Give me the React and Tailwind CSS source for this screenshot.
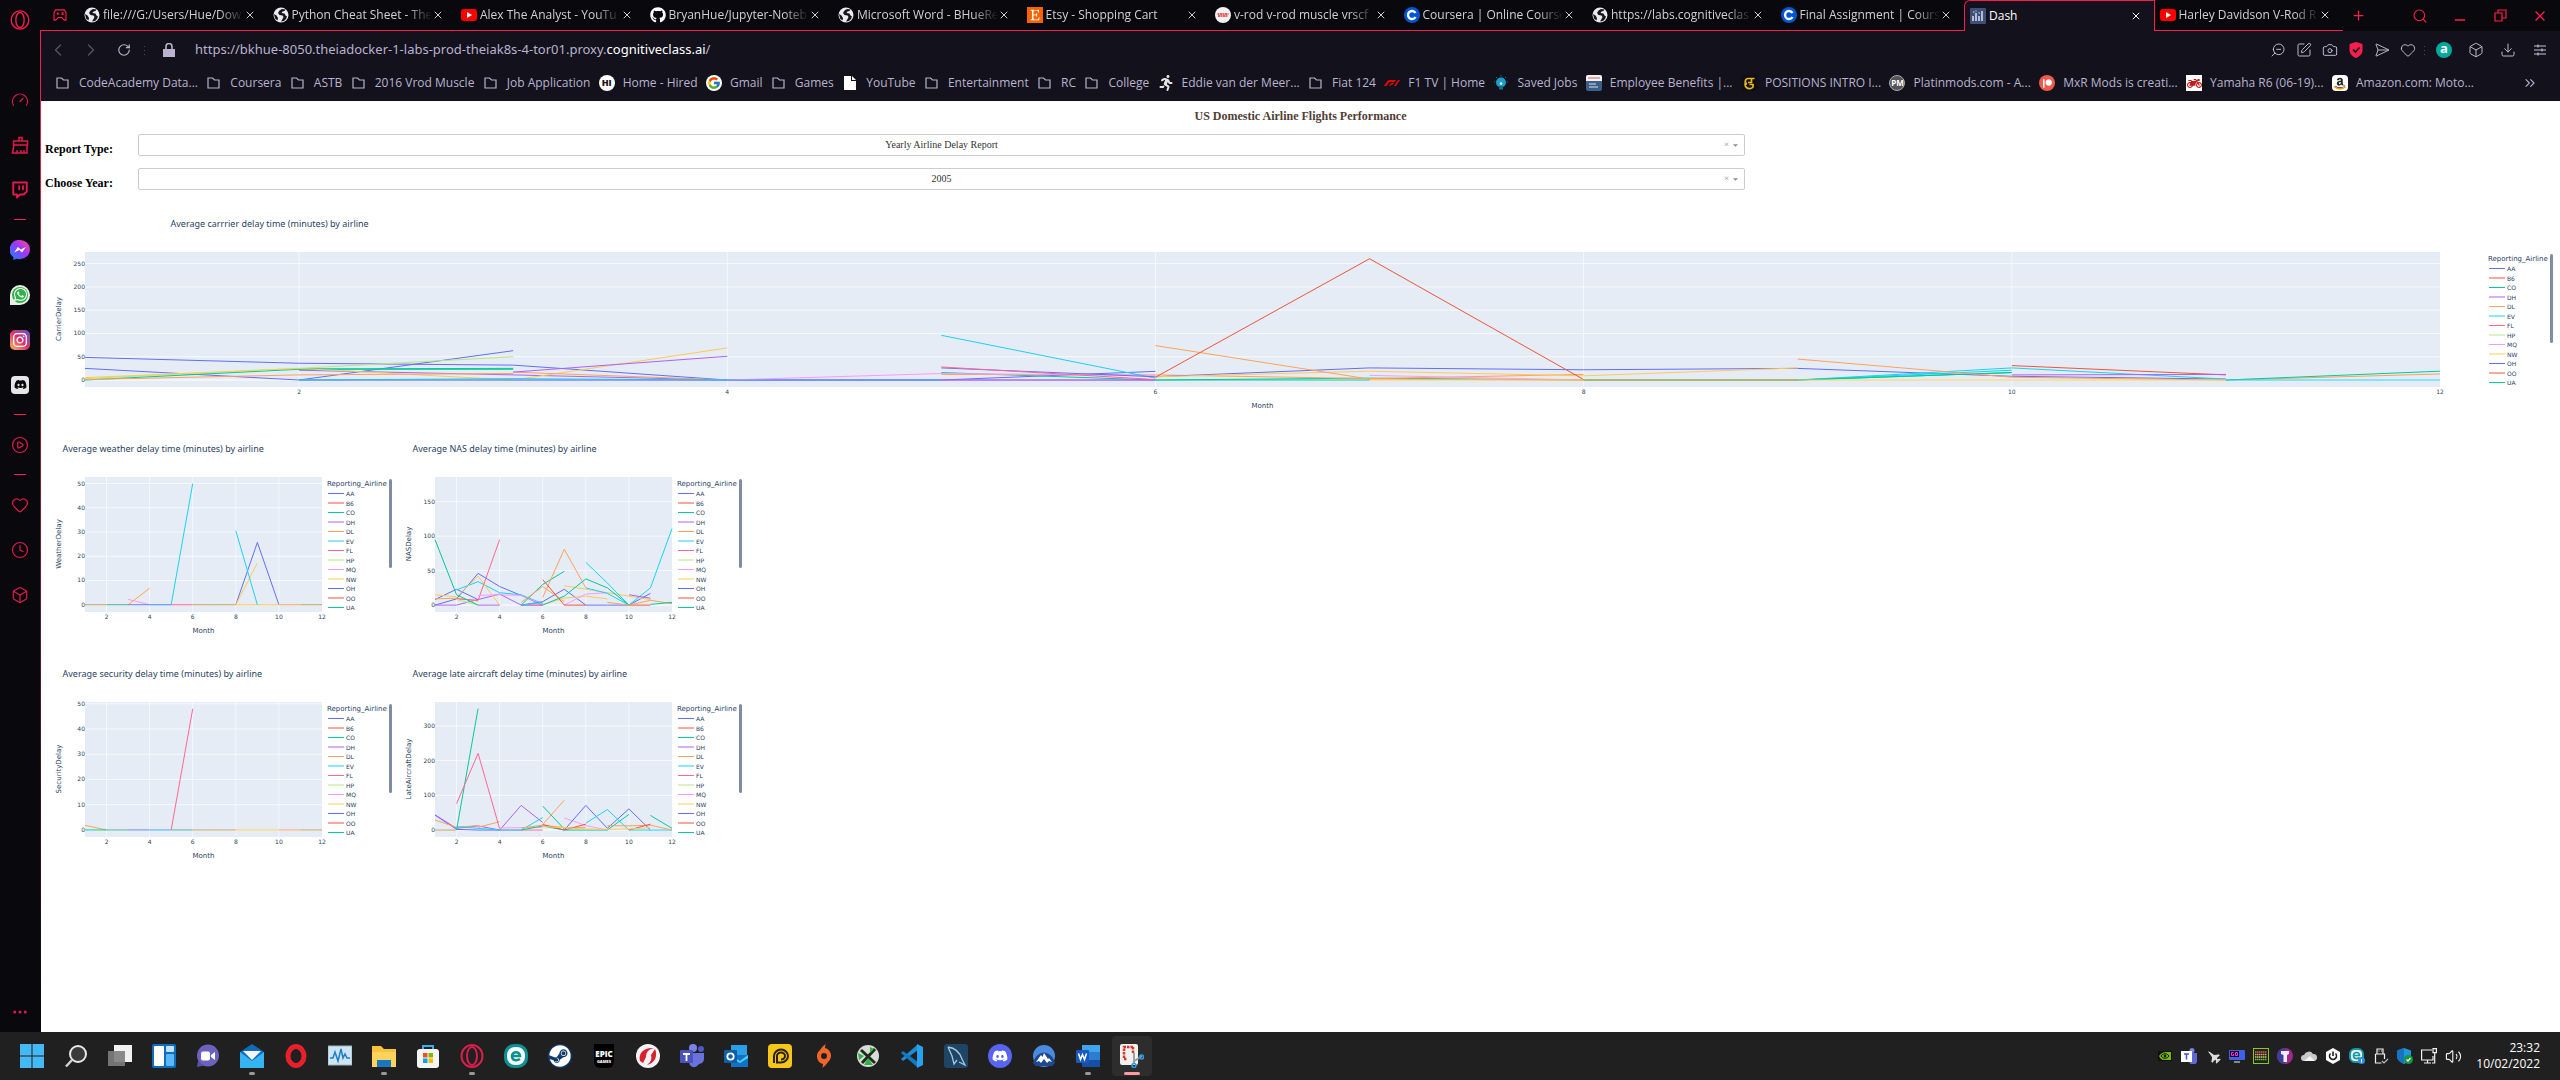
import React from "react";
import {
  FaGithub, FaEtsy, FaAmazon, FaPatreon, FaInstagram, FaWhatsapp,
  FaDiscord, FaSteam, FaMotorcycle, FaRunning, FaFighterJet,
} from "react-icons/fa";
import { FcGoogle } from "react-icons/fc";
import {
  Search, X, Plus, Minus, Copy, RotateCw, ChevronLeft, ChevronRight, ZoomOut,
  SquarePen, Camera, SendHorizontal, Heart, Box, Download, ChevronsRight,
  Gauge, Twitch, CirclePlay, Clock, Ellipsis, Volume2,
} from "lucide-react";

/* ---------- favicons ---------- */

const Globe = () => (
  <svg viewBox="0 0 16 16" className="size-4">
    <circle cx="8" cy="8" r="7.500" fill="#ececf0" />
    <path d="M12.500 2.500L9 2 6.500 3.500 5 6l1.500 2 3 .5 1 1.500-1 2-1.500 2.500 3-.5 2-2 1-2.500-1.500-1-1-2-3-.5 1-1.500 2-.5z" fill="#16151d" />
    <path d="M1 7l2.500 1.500L5 11l-.5 2.500L2 11.500z" fill="#16151d" />
  </svg>
);
const Tube = () => (
  <svg viewBox="0 0 16 16" className="size-4">
    <rect y="2" width="16" height="12" rx="3" fill="#f00" />
    <path d="M6 5l5 3-5 3z" fill="#fff" />
  </svg>
);
const CourseraMark = () => (
  <svg viewBox="0 0 16 16" className="size-4">
    <circle cx="8" cy="8" r="8" fill="#0056d2" />
    <path d="M11.5 6A4 4 0 1 0 11.5 10" fill="none" stroke="#fff" strokeWidth="2.4" />
  </svg>
);
const DashMark = () => (
  <svg viewBox="0 0 16 16" className="size-4">
    <rect width="16" height="16" rx="1" fill="#3f4f75" />
    <path d="M3 8v5M6 5v8M9 8v5M12 3v10" stroke="#cfd8ee" strokeWidth="1.6" />
    <path d="M3 4h1.5M8.500 5h1.500M5.500 3h1" stroke="#8fb4f0" strokeWidth="1.4" />
  </svg>
);
const VrodMark = () => (
  <svg viewBox="0 0 16 16" className="size-4">
    <circle cx="8" cy="8" r="8" fill="#f2f2f2" />
    <path d="M2.500 7h11M3 9h10" stroke="#d33" strokeWidth="1.500" strokeDasharray="2 .5" />
  </svg>
);
const EtsyMark = () => (
  <span className="flex size-4 items-center justify-center bg-[#f56400]">
    <FaEtsy className="size-3 text-white" />
  </span>
);
const GitMark = () => <FaGithub className="size-4 text-white" />;

/* ---------- bookmark icons ---------- */

const FolderIcon = () => (
  <svg viewBox="0 0 14 12" className="h-3 w-[14px]" fill="none" stroke="#b9b3cf" strokeWidth="1.200">
    <path d="M1 1h4.500l2 2H12v8H1z" />
  </svg>
);
const HiredMark = () => (
  <span className="flex size-4 items-center justify-center rounded-full bg-white text-[9px] font-black text-[#15141c]">HI</span>
);
const PageMark = () => (
  <svg viewBox="0 0 16 16" className="size-4">
    <path d="M2 1h7v5h5v9H2z" fill="#fff" />
    <path d="M10 1l4 4h-4z" fill="#fff" />
  </svg>
);
const RunMark = () => <FaRunning className="size-4 text-[#e4e4e4]" />;
const F1Mark = () => (
  <svg viewBox="0 0 16 16" className="size-4">
    <path d="M0 11l3-4.500C3.600 5.500 4.500 5 6 5h6l-1.500 2H6.500c-1 0-1.300.2-1.900 1L2.500 11zM5 11l1.800-2.400c.4-.5.7-.6 1.400-.6h2l-1.200 1.500H7.800L6.500 11zM10 11l4-6h2l-4 6z" fill="#e10600" />
  </svg>
);
const BulbMark = () => (
  <svg viewBox="0 0 16 16" className="size-4">
    <circle cx="8" cy="7.500" r="5" fill="#1c9fc7" />
    <path d="M6 11h4v3.500H6z" fill="#14708e" />
    <circle cx="8" cy="8.500" r="1.300" fill="#fff" />
    <path d="M8 0v1.500M1 7h1M14 7h1M3 2l1 1M13 2l-1 1" stroke="#14708e" />
  </svg>
);
const BenefitsMark = () => (
  <svg viewBox="0 0 16 16" className="size-4">
    <rect width="16" height="16" rx="2" fill="#3c5f86" />
    <path d="M0 2a2 2 0 0 1 2-2h12a2 2 0 0 1 2 2v4H0z" fill="#f2f2f2" />
    <path d="M2 3h12" stroke="#c66" strokeWidth="1" />
    <path d="M3 9h7M3 12h9" stroke="#d8e2ee" strokeWidth="1.200" />
  </svg>
);
const PositionsMark = () => (
  <svg viewBox="0 0 16 16" className="size-4">
    <rect width="16" height="16" fill="#0f0e12" />
    <path d="M13.500 3.500H7a3 3 0 0 0-1 5.700M10.500 3.500v4H7M5 6.500a4 4 0 1 0 7 5.500V9.500H8.500" fill="none" stroke="#e9b91c" strokeWidth="1.700" />
  </svg>
);
const PlatinMark = () => (
  <span className="flex size-4 items-center justify-center rounded-full border border-[#aaa] bg-[#555] text-[8px] font-bold text-white">PM</span>
);
const PatreonMark = () => (
  <span className="flex size-4 items-center justify-center rounded-full bg-[#f1594a]">
    <FaPatreon className="size-[9px] text-white" />
  </span>
);
const YamahaMark = () => (
  <span className="flex size-4 items-center justify-center bg-white">
    <FaMotorcycle className="size-[15px] text-[#c21d1d]" />
  </span>
);
const AmazonMark = () => (
  <span className="relative flex size-4 items-center justify-center rounded-sm bg-white">
    <FaAmazon className="size-3 text-[#222]" />
    <svg viewBox="0 0 16 16" className="absolute inset-0 size-4"><path d="M2 11.500c4 3 8 3 11.500.5" fill="none" stroke="#ff9900" strokeWidth="1.500" /></svg>
  </span>
);

const TABS = [
  ["file:///G:/Users/Hue/Dow", Globe],
  ["Python Cheat Sheet - The", Globe],
  ["Alex The Analyst - YouTu", Tube],
  ["BryanHue/Jupyter-Noteb", GitMark],
  ["Microsoft Word - BHueRe", Globe],
  ["Etsy - Shopping Cart", EtsyMark],
  ["v-rod v-rod muscle vrscf", VrodMark],
  ["Coursera | Online Course", CourseraMark],
  ["https://labs.cognitiveclas", Globe],
  ["Final Assignment | Cours", CourseraMark],
  ["Dash", DashMark],
  ["Harley Davidson V-Rod R", Tube],
];

const BOOKMARKS = [
  ["CodeAcademy Data...", FolderIcon], ["Coursera", FolderIcon], ["ASTB", FolderIcon],
  ["2016 Vrod Muscle", FolderIcon], ["Job Application", FolderIcon], ["Home - Hired", HiredMark],
  ["Gmail", () => <FcGoogle className="size-4 rounded-full bg-white p-px" />], ["Games", FolderIcon],
  ["YouTube", PageMark], ["Entertainment", FolderIcon], ["RC", FolderIcon], ["College", FolderIcon],
  ["Eddie van der Meer...", RunMark], ["Fiat 124", FolderIcon], ["F1 TV | Home", F1Mark],
  ["Saved Jobs", BulbMark], ["Employee Benefits |...", BenefitsMark],
  ["POSITIONS INTRO I...", PositionsMark], ["Platinmods.com - A...", PlatinMark],
  ["MxR Mods is creati...", PatreonMark], ["Yamaha R6 (06-19)...", YamahaMark],
  ["Amazon.com: Moto...", AmazonMark],
];

/* ---------- browser chrome ---------- */

const OperaRing = ({ className, color = "#fa1e4e", width = 1.6 }) => (
  <svg viewBox="0 0 24 24" className={className} fill="none" stroke={color} strokeWidth={width}>
    <ellipse cx="12" cy="12" rx="10.500" ry="11" />
    <ellipse cx="12" cy="12" rx="5" ry="9" />
  </svg>
);

function SideButton({ label, children }) {
  return (
    <button aria-label={label} className="flex h-[45px] w-10 items-center justify-center text-[#e0194a]">
      {children}
    </button>
  );
}
const SideRule = () => (
  <div className="flex h-[15px] items-center justify-center"><div className="h-px w-3 bg-[#fa1e4e]" /></div>
);

const CleanerIcon = () => (
  <svg viewBox="0 0 18 18" className="size-[18px]" fill="none" stroke="currentColor" strokeWidth="1.500">
    <path d="M8 5V1.500h3V5M2.500 5h14v4h-14zM3 9l-1.500 8h14.500V9M6 17v-3M10 17v-3M13 17v-3" />
  </svg>
);

function Sidebar() {
  return (
    <nav aria-label="Sidebar" className="flex w-10 shrink-0 flex-col bg-[#09090d]">
      <button aria-label="Opera menu" className="flex h-10 w-10 items-center justify-center">
        <OperaRing className="size-5" />
      </button>
      <div className="h-[37px]" />
      <SideButton label="GX Control"><Gauge className="size-[18px]" strokeWidth={1.6} /></SideButton>
      <SideButton label="GX Cleaner"><CleanerIcon /></SideButton>
      <SideButton label="Twitch"><Twitch className="size-[18px]" strokeWidth={2.6} /></SideButton>
      <SideRule />
      <SideButton label="Messenger">
        <svg viewBox="0 0 24 24" className="size-5">
          <defs>
            <linearGradient id="msg" x1="0" y1="1" x2="1" y2="0">
              <stop offset="0" stopColor="#0a8dff" /><stop offset=".55" stopColor="#a033ff" /><stop offset="1" stopColor="#ff5280" />
            </linearGradient>
          </defs>
          <path d="M12 0a12 11.500 0 0 1 0 23c-1.500 0-2.800-.2-4-.6L4 24v-3.500A11.500 11.500 0 0 1 12 0z" fill="url(#msg)" />
          <path d="M5 15l4.500-6.500 3.500 3 6-3-4.500 6.500-3.500-3z" fill="#fff" />
        </svg>
      </SideButton>
      <SideButton label="WhatsApp">
        <span className="flex size-5 items-center justify-center rounded-full rounded-bl-sm bg-[#e8efe8]">
          <span className="flex size-4 items-center justify-center rounded-full bg-[#2fb24a]">
            <FaWhatsapp className="size-[15px] text-white" />
          </span>
        </span>
      </SideButton>
      <SideButton label="Instagram">
        <span className="flex size-5 items-center justify-center rounded-[5px] bg-gradient-to-tr from-[#fdb94a] via-[#d92e6f] to-[#6a3fd0]">
          <FaInstagram className="size-4 text-white" />
        </span>
      </SideButton>
      <SideButton label="Discord">
        <span className="flex size-[18px] items-center justify-center rounded-sm bg-[#e6e6e6]">
          <FaDiscord className="size-[13px] text-[#09090d]" />
        </span>
      </SideButton>
      <SideRule />
      <SideButton label="Player"><CirclePlay className="size-[18px]" strokeWidth={1.6} /></SideButton>
      <SideRule />
      <SideButton label="Pinboards"><Heart className="size-[18px]" strokeWidth={1.6} /></SideButton>
      <SideButton label="History"><Clock className="size-[18px]" strokeWidth={1.6} /></SideButton>
      <SideButton label="Extensions"><Box className="size-[18px]" strokeWidth={1.6} /></SideButton>
      <div className="grow" />
      <button aria-label="Sidebar setup" className="flex h-10 w-10 items-center justify-center text-[#e0194a]">
        <Ellipsis className="size-[18px]" />
      </button>
    </nav>
  );
}

function TabStrip() {
  return (
    <div className="flex h-[31px] bg-[#09090d]">
      <button aria-label="GX corner" className="flex w-[39px] shrink-0 items-center justify-center border-b border-[#fa1e4e] text-[#fa1e4e]">
        <svg viewBox="0 0 16 14" className="h-3 w-[14px]" fill="none" stroke="currentColor" strokeWidth="1.300">
          <path d="M3 1h10l2 3v9h-2l-3-3H6l-3 3H1V4z" />
          <path d="M4 5.500h3M5.500 4v3M10 4l2 3M12 4l-2 3" />
        </svg>
      </button>
      <div role="tablist" className="flex min-w-0 flex-1">
        {TABS.map(([title, Icon]) => {
          const active = title === "Dash";
          return (
            <div
              key={title}
              role="tab"
              aria-selected={active}
              className={
                "flex min-w-0 flex-1 items-center pr-3 pl-[5px] text-[12px] " +
                (active
                  ? "rounded-tl-md border-x border-t border-[#fa1e4e] bg-[#13111b] text-white"
                  : "border-b border-[#fa1e4e] text-[#d0cfd6]")
              }
            >
              <span className="shrink-0"><Icon /></span>
              <span
                className={
                  "ml-[3px] min-w-0 flex-1 whitespace-nowrap " +
                  (active ? "" : "[mask-image:linear-gradient(to_right,#000_82%,transparent)]")
                }
              >
                {title}
              </span>
              <button aria-label={"Close " + title} className="shrink-0">
                <X className="size-3" strokeWidth={2} />
              </button>
            </div>
          );
        })}
      </div>
      <button aria-label="New tab" className="flex w-[30px] items-center justify-center text-[#fa1e4e]"><Plus className="size-[15px]" strokeWidth={2} /></button>
      <div className="w-[27px]" />
      <button aria-label="Search tabs" className="flex w-10 items-center justify-center text-[#fa1e4e]"><Search className="size-4" strokeWidth={1.6} /></button>
      <button aria-label="Minimize" className="flex w-10 items-center justify-center pt-2 text-[#fa1e4e]"><Minus className="size-4" strokeWidth={2} /></button>
      <button aria-label="Restore" className="flex w-10 items-center justify-center text-[#fa1e4e]">
        <svg viewBox="0 0 13 13" className="size-[13px]" fill="none" stroke="currentColor" strokeWidth="1.200">
          <path d="M1 4h7v8H1zM4 4V1h8v8H8" />
        </svg>
      </button>
      <button aria-label="Close window" className="flex w-10 items-center justify-center text-[#fa1e4e]"><X className="size-4" strokeWidth={2} /></button>
    </div>
  );
}

const Dots = ({ className }) => (
  <span className={"flex flex-col gap-[3px] " + className}>
    <i className="size-px bg-[#4a465a]" /><i className="size-px bg-[#4a465a]" /><i className="size-px bg-[#4a465a]" />
  </span>
);

function AddressBar() {
  const icon = "size-4 text-[#c9c4dc]";
  return (
    <div className="flex h-[38px] items-center bg-[#13111b] pr-3 text-[#b9b3cf]">
      <button aria-label="Back" className="flex w-[33px] justify-center text-[#57526a]"><ChevronLeft className="size-5" strokeWidth={1.6} /></button>
      <button aria-label="Forward" className="flex w-[33px] justify-center text-[#57526a]"><ChevronRight className="size-5" strokeWidth={1.6} /></button>
      <button aria-label="Reload" className="flex w-[33px] justify-center"><RotateCw className="size-[14px]" strokeWidth={2} /></button>
      <Dots className="ml-1" />
      <svg viewBox="0 0 12 14" className="ml-[18px] h-[14px] w-3">
        <path d="M0 6h12v8H0z" fill="#b9b3cf" />
        <path d="M3 6V3.500a3 3 0 0 1 6 0V6" fill="none" stroke="#b9b3cf" strokeWidth="1.600" />
      </svg>
      <p className="ml-5 flex-1 whitespace-nowrap font-['Noto_Sans',sans-serif] text-[13px]">
        https://bkhue-8050.theiadocker-1-labs-prod-theiak8s-4-tor01.proxy.
        <span className="text-white">cognitiveclass.ai</span>/
      </p>
      <div className="flex items-center gap-[10px]">
        <button aria-label="Zoom out"><ZoomOut className={icon + " -scale-x-100"} strokeWidth={1.4} /></button>
        <button aria-label="Edit page"><SquarePen className={icon} strokeWidth={1.4} /></button>
        <button aria-label="Snapshot"><Camera className={icon} strokeWidth={1.4} /></button>
        <button aria-label="Ad blocker">
          <svg viewBox="0 0 16 16" className="size-4">
            <path d="M8 0l6.500 2v6c0 4-3 6.500-6.500 8C4.500 14.500 1.500 12 1.500 8V2z" fill="#fa1e4e" />
            <path d="M5 7.500l2.500 2.500L11.500 5.500" fill="none" stroke="#13111b" strokeWidth="1.800" />
          </svg>
        </button>
        <button aria-label="My flow"><SendHorizontal className={icon} strokeWidth={1.4} /></button>
        <button aria-label="Add bookmark"><Heart className={icon} strokeWidth={1.4} /></button>
      </div>
      <Dots className="mx-2" />
      <div className="flex items-center gap-4">
        <button aria-label="Extension" className="ml-[3px] flex size-4 items-center justify-center rounded-full bg-[#00a99d] pb-0.5 text-[13px] font-bold text-white">a</button>
        <button aria-label="Extensions"><Box className={icon} strokeWidth={1.4} /></button>
        <button aria-label="Downloads"><Download className={icon} strokeWidth={1.4} /></button>
        <button aria-label="Easy setup">
          <svg viewBox="0 0 16 16" className={icon} fill="none" stroke="currentColor" strokeWidth="1.100">
            <path d="M2 4h12M2 8h12M2 12h12M6 2.500v3M10 6.500v3M6 10.500v3" />
          </svg>
        </button>
      </div>
    </div>
  );
}

function BookmarkBar() {
  return (
    <div className="flex h-8 items-start bg-[#13111b] pr-[22px] pl-[14px] text-[12px] text-[#b9b3cf]">
      <ul className="flex min-w-0 flex-1 justify-between whitespace-nowrap">
        {BOOKMARKS.map(([name, Icon]) => (
          <li key={name}>
            <a href="#" className="flex h-7 items-center gap-2">
              <span className="flex w-4 justify-center"><Icon /></span>{name}
            </a>
          </li>
        ))}
      </ul>
      <button aria-label="More bookmarks" className="ml-[48px] flex h-7 items-center"><ChevronsRight className="size-4" strokeWidth={1.6} /></button>
    </div>
  );
}

/* ---------- charts ---------- */

const C = {
  blue: "#636efa", red: "#EF553B", green: "#00cc96", purple: "#ab63fa", orange: "#FFA15A",
  cyan: "#19d3f3", pink: "#FF6692", lime: "#B6E880", mag: "#FF97FF", yellow: "#FECB52",
  tan: "#c2a35c", teal: "#4fae9b", azure: "#3aa6f7", steel: "#5f86d8",
};

const AIRLINES = [
  ["AA", C.blue], ["B6", C.red], ["CO", C.green], ["DH", C.purple], ["DL", C.orange], ["EV", C.cyan],
  ["FL", C.pink], ["HP", C.lime], ["MQ", C.mag], ["NW", C.yellow], ["OH", C.blue], ["OO", C.red], ["UA", C.green],
];

// Each series: [colour, first month, ...values]
const CARRIER = [
  [C.blue, 1, 48.6, 36, 32, 0, 0, 18.6],
  [C.green, 5, 16, 0, 4, 0, 0, 16],
  [C.purple, 2, 21, 11, 0, 0, 0],
  [C.orange, 5, 12, 11, 3, 12],
  [C.blue, 1, 25, 0, 63],
  [C.lime, 1, 3, 25, 50],
  [C.green, 1, 0, 23, 23],
  [C.green, 2, 24, 25],
  [C.yellow, 1, 5, 25, 0, 69],
  [C.orange, 1, 1, 11, 14],
  [C.orange, 3, 17, 0],
  [C.purple, 3, 17, 51],
  [C.pink, 2, 0, 0, 0],
  [C.mag, 3, 0, 0, 14, 10],
  [C.mag, 7, 10, 0],
  [C.cyan, 2, 0, 3, 0],
  [C.azure, 2, 0, 0, 0, 0],
  [C.purple, 5, 0, 0],
  [C.cyan, 5, 96, 4],
  [C.blue, 5, 26, 7, 26, 22, 25, 8, 2],
  [C.pink, 5, 28, 1],
  [C.yellow, 6, 7, 19, 9, 26],
  [C.orange, 6, 74, 2, 0],
  [C.red, 6, 6, 260.5, 1],
  [C.cyan, 8, 0, 0, 26, 2],
  [C.cyan, 9, 0, 21],
  [C.green, 8, 0, 0, 16],
  [C.orange, 9, 45, 6, 0, 13],
  [C.red, 10, 31, 11],
  [C.purple, 10, 11, 12],
  [C.green, 11, 0, 19],
  [C.yellow, 7, 0, 0, 0, 0, 0],
  [C.green, 6, 0, 0],
  [C.tan, 8, 0, 0],
  [C.cyan, 11, 0, 0],
];

const WEATHER = [
  [C.orange, 3, 0, 6.8],
  [C.tan, 1, 0, 0],
  [C.teal, 2, 0, 0],
  [C.mag, 3, 2.2, 0, 0],
  [C.steel, 3, 0, 0],
  [C.azure, 4, 0, 0],
  [C.cyan, 5, 0, 50],
  [C.pink, 5, 0, 0],
  [C.tan, 6, 0, 0, 0],
  [C.blue, 8, 0, 25.7, 0],
  [C.yellow, 8, 0, 17.2],
  [C.yellow, 8, 0, 0, 0],
  [C.cyan, 8, 30.5, 0],
  [C.orange, 10, 0, 0],
  [C.tan, 11, 0, 0],
];

const NAS = [
  [C.blue, 1, 8, 23, 8],
  [C.blue, 1, 0, 9, 46, 27, 14, 0],
  [C.purple, 1, 0, 0, 8, 16, 0, 0],
  [C.orange, 1, 9, 10, 6],
  [C.cyan, 2, 22, 34, 18, 15, 2],
  [C.yellow, 1, 15, 12, 42, 0],
  [C.pink, 2, 9, 7, 95],
  [C.lime, 2, 8, 0],
  [C.green, 1, 95, 15, 0],
  [C.mag, 3, 14, 15, 14, 1],
  [C.purple, 3, 0, 0],
  [C.green, 5, 0, 30, 49],
  [C.pink, 5, 0, 0],
  [C.blue, 5, 0, 5, 23, 0, 0, 0, 17],
  [C.cyan, 5, 0, 4],
  [C.orange, 5, 4, 27, 5],
  [C.orange, 6, 11, 81, 25],
  [C.yellow, 6, 1, 10, 13, 9],
  [C.yellow, 7, 28, 23, 18, 13, 8],
  [C.mag, 7, 0, 16, 18],
  [C.red, 6, 37, 0, 0],
  [C.red, 10, 0, 0],
  [C.cyan, 8, 25, 17, 0],
  [C.cyan, 8, 62, 32, 0, 25, 111],
  [C.green, 6, 0, 13, 38, 25, 0],
  [C.purple, 10, 15, 10],
  [C.orange, 9, 4, 0, 7, 2],
  [C.green, 11, 1, 4],
];

const SECURITY = [
  [C.orange, 1, 1.8, 0],
  [C.green, 1, 0, 0],
  [C.teal, 2, 0, 0],
  [C.steel, 3, 0, 0],
  [C.azure, 4, 0, 0],
  [C.teal, 5, 0, 0],
  [C.pink, 5, 0, 48],
  [C.tan, 6, 0, 0, 0],
  [C.yellow, 8, 0, 0, 0],
  [C.orange, 10, 0, 0],
  [C.tan, 11, 0, 0],
];

const LATE = [
  [C.blue, 1, 43, 2, 0, 0],
  [C.purple, 1, 44, 5, 12, 0, 71, 22],
  [C.orange, 1, 29, 8, 13],
  [C.orange, 3, 8, 24],
  [C.tan, 1, 0, 0],
  [C.green, 2, 0, 350],
  [C.pink, 2, 76, 221, 4],
  [C.pink, 4, 0, 0, 0],
  [C.cyan, 2, 10, 5, 0, 0, 36],
  [C.mag, 4, 6, 7, 8],
  [C.mag, 7, 35, 13, 0],
  [C.green, 5, 0, 12, 0, 0],
  [C.green, 6, 69, 3],
  [C.orange, 5, 6, 14, 7, 7],
  [C.orange, 6, 16, 86],
  [C.red, 6, 16, 0, 17],
  [C.blue, 7, 0, 71, 5, 61, 0],
  [C.cyan, 8, 20, 59, 0, 0, 0],
  [C.green, 8, 0, 0, 45],
  [C.orange, 9, 13, 12, 14, 0],
  [C.red, 10, 0, 17],
  [C.yellow, 6, 10, 7, 3, 2, 3, 7],
  [C.green, 11, 42, 5],
];

function Chart({ title, yTitle, width, right, min, max, step, series }) {
  const left = 40, top = 50, bottom = 185;
  const plotW = width - left - right;
  const x = (m) => left + (plotW * (m - 1)) / 11;
  const y = (v) => bottom - ((v - min) / (max - min)) * (bottom - top);
  const ticks = [];
  for (let v = 0; v <= max; v += step) ticks.push(v);
  const legendX = width - 68;
  return (
    <figure className="min-w-0">
      <svg viewBox={`0 0 ${width} 225`} className="block h-auto w-full font-['DejaVu_Sans',sans-serif]" fill="#2a3f5f" role="img" aria-label={title}>
        <text x={width / 20} y="25" className="text-[9px] font-['Noto_Sans',sans-serif]">{title}</text>
        <rect x={left} y={top} width={plotW} height={bottom - top} fill="#E5ECF6" />
        {[2, 4, 6, 8, 10, 12].map((m) => (
          <g key={m}>
            {m < 12 && <path d={`M${x(m)} ${top}V${bottom}`} stroke="#fff" strokeWidth=".6" />}
            <text x={x(m)} y="192" textAnchor="middle" className="text-[6px]">{m}</text>
          </g>
        ))}
        {ticks.map((v) => (
          <g key={v}>
            <path d={`M${left} ${y(v)}H${left + plotW}`} stroke="#fff" strokeWidth={v === 0 ? 1 : 0.7} />
            <text x={left} y={y(v) + 2} textAnchor="end" className="text-[6px]">{v}</text>
          </g>
        ))}
        {series.map(([color, start, ...vals], i) => (
          <polyline key={i} fill="none" stroke={color} strokeWidth="1" points={vals.map((v, k) => `${x(start + k)},${y(v)}`).join(" ")} />
        ))}
        <text x={left + plotW / 2} y="206" textAnchor="middle" className="text-[7px]">Month</text>
        <text transform="translate(16 117) rotate(-90)" textAnchor="middle" className="text-[7px]">{yTitle}</text>
        <text x={legendX} y="59" className="text-[7px]">Reporting_Airline</text>
        {AIRLINES.map(([code, color], i) => (
          <g key={code}>
            <path d={`M${legendX + 1} ${66.5 + i * 9.5}h16`} stroke={color} strokeWidth="1" />
            <text x={legendX + 19} y={69 + i * 9.5} className="text-[6px]">{code}</text>
          </g>
        ))}
        <rect x={width - 6} y="52" width="3" height="89" rx="1.500" fill="#808BA4" />
      </svg>
    </figure>
  );
}

/* ---------- page ---------- */

function Field({ id, label, options }) {
  return (
    <div className="flex h-[34px] items-start">
      <label htmlFor={id} className="w-[93px] shrink-0 text-[12px] leading-[30px] font-bold text-black">{label}</label>
      <div className="relative h-[22px] w-[64%]">
        <select id={id} className="block h-[22px] w-full appearance-none rounded-xs border border-[#ccc] bg-white pb-0.5 text-[10px] text-[#333] [text-align-last:center]">
          {options.map((o) => <option key={o}>{o}</option>)}
        </select>
        <div className="pointer-events-none absolute inset-y-0 right-[7px] flex items-center gap-1">
          <span className="text-[9px] text-[#888]">×</span>
          <svg viewBox="0 0 6 3" className="h-[3px] w-[5px]"><path d="M0 0h6L3 3z" fill="#888" /></svg>
        </div>
      </div>
    </div>
  );
}

function Dashboard() {
  return (
    <main className="flex-1 bg-white px-1 font-['Liberation_Serif',serif]">
      <h1 className="mb-[3px] text-center text-[12px] leading-[30px] font-bold text-[#503D36]">US Domestic Airline Flights Performance</h1>
      <Field id="report" label="Report Type:" options={["Yearly Airline Delay Report", "Yearly Airline Performance Report"]} />
      <Field id="year" label="Choose Year:" options={["2005", "2006", "2007"]} />
      <Chart title="Average carrrier delay time (minutes) by airline" yTitle="CarrierDelay" width={2511} right={116} min={-15} max={275} step={50} series={CARRIER} />
      <div className="grid w-[700px] max-w-full grid-cols-2">
        <Chart title="Average weather delay time (minutes) by airline" yTitle="WeatherDelay" width={350} right={73} min={-3} max={52.7} step={10} series={WEATHER} />
        <Chart title="Average NAS delay time (minutes) by airline" yTitle="NASDelay" width={350} right={73} min={-10} max={185.8} step={50} series={NAS} />
        <Chart title="Average security delay time (minutes) by airline" yTitle="SecurityDelay" width={350} right={73} min={-2.8} max={50.7} step={10} series={SECURITY} />
        <Chart title="Average late aircraft delay time (minutes) by airline" yTitle="LateAircraftDelay" width={350} right={73} min={-20} max={369} step={100} series={LATE} />
      </div>
    </main>
  );
}

/* ---------- taskbar ---------- */

const Svg = ({ children }) => <svg viewBox="0 0 24 24" className="size-6">{children}</svg>;

const APPS = [
  ["Start", <Svg><path d="M0 0h11.500v11.500H0zM12.500 0H24v11.500H12.500zM0 12.500h11.500V24H0zM12.500 12.500H24V24H12.500z" fill="#45b8f5" /></Svg>],
  ["Search", <Svg><circle cx="14" cy="10" r="8" fill="#3a3a3a" stroke="#e8e8e8" strokeWidth="2" /><path d="M8 16l-6 6.500" stroke="#d0d0d0" strokeWidth="2.500" /></Svg>],
  ["Task view", <Svg><rect x="6" y="1" width="18" height="17" fill="#f1f1f1" /><rect x="0" y="7" width="17" height="15" fill="#7d7d7d" opacity=".9" /></Svg>],
  ["Widgets", <Svg><rect width="24" height="24" rx="2" fill="#0f6ebe" /><rect x="2" y="2" width="10" height="20" rx="1" fill="#fff" /><rect x="14" y="2" width="8" height="6" rx="1" fill="#bfe3fb" /><rect x="14" y="10" width="8" height="12" rx="1" fill="#59b8f5" /></Svg>],
  ["Chat", <Svg><circle cx="12" cy="11.500" r="11" fill="#6b62c0" /><path d="M2 17l-1 6 7-1.500z" fill="#5a52b0" /><rect x="5" y="7.500" width="9" height="9" rx="2" fill="#fff" /><path d="M15 11l4-3v8l-4-3z" fill="#fff" /></Svg>],
  ["Mail", <Svg><path d="M0 8L12 0l12 8v16H0z" fill="#0f6cbd" /><path d="M0 8l12 9 12-9v16H0z" fill="#35b4f2" /><path d="M3 7h18l-9 9z" fill="#f4f4f4" /></Svg>, "dot"],
  ["Opera", <Svg><ellipse cx="12" cy="12" rx="8" ry="9.500" fill="none" stroke="#e8202c" strokeWidth="5" /></Svg>],
  ["Task Manager", <Svg><rect y="2" width="24" height="19" fill="#cfe5f5" stroke="#9bb" /><path d="M2 14h3l2-6 3 9 3-12 2 9 2-4 2 4h3" fill="none" stroke="#1f7fc4" strokeWidth="1.500" /></Svg>],
  ["File Explorer", <Svg><path d="M0 2h9l3 3h12v18H0z" fill="#f7c23c" /><path d="M0 8h24v15H0z" fill="#fdd35c" /><path d="M5 16h14v7H5z" fill="#1a78c2" /></Svg>, "dot"],
  ["Store", <Svg><path d="M7 6V2h10v4" fill="none" stroke="#35b0ee" strokeWidth="2" /><rect x="1" y="5" width="22" height="19" rx="3" fill="#f5f5f5" /><path d="M7 9h4.500v4.500H7z" fill="#f25022" /><path d="M12.500 9H17v4.500h-4.500z" fill="#7fba00" /><path d="M7 14.500h4.500V19H7z" fill="#00a4ef" /><path d="M12.500 14.500H17V19h-4.500z" fill="#ffb900" /></Svg>],
  ["Opera GX", <OperaRing className="size-6" color="#d81e4c" width={2} />, "dot"],
  ["Eset", <Svg><rect width="24" height="24" rx="10" fill="#0f8f93" /><rect x="3" y="3" width="18" height="18" rx="8" fill="#f3fafa" /><path d="M8 12h8c0-5-8-5-8 0 0 5 5 5 8 3" fill="none" stroke="#0f8f93" strokeWidth="2.500" /></Svg>],
  ["Steam", <span className="flex size-6 items-center justify-center rounded-full bg-[#123a6b]"><FaSteam className="size-[22px] text-white" /></span>],
  ["Epic Games", <span className="flex h-6 w-5 flex-col items-center justify-center rounded-b-md bg-black text-[8px] leading-[10px] font-black text-white">EPIC<span className="text-[4px] leading-[5px]">GAMES</span></span>],
  ["Cleaner", <Svg><circle cx="12" cy="12" r="12" fill="#f4f4f4" /><path d="M4 17C2 9 8 3 18 4c-5 1-8 4-8 9l-3 6z" fill="#d8232f" /><path d="M19 5c3 7 0 14-8 16 4-3 5-6 4-10z" fill="#d8232f" /></Svg>],
  ["Teams", <Svg><circle cx="13" cy="4" r="4" fill="#7b83eb" /><circle cx="21" cy="5" r="3" fill="#5059c9" /><path d="M9 9h15v6a5 5 0 0 1-5 5c-3 5-10 4-10-3z" fill="#6a72dc" /><rect y="6" width="13" height="13" rx="1" fill="#4b53bc" /><path d="M3 10h7M6.500 10v7" stroke="#fff" strokeWidth="1.800" /></Svg>],
  ["Outlook", <Svg><rect x="7" y="1" width="16" height="12" fill="#2a9fe6" /><path d="M7 11h17v12H7z" fill="#1273c4" /><path d="M7 11l9 6 8-6v3l-8 5-9-5z" fill="#50d0f8" /><rect y="6" width="13" height="13" rx="1" fill="#0f5ea8" /><circle cx="6.500" cy="12.500" r="3.200" fill="none" stroke="#fff" strokeWidth="1.800" /></Svg>],
  ["Potplayer", <Svg><rect width="24" height="24" rx="4" fill="#f6c61b" /><path d="M6 19V12a7 6.500 0 1 1 7 6.500H9V12a4 3.500 0 1 1 4 3.500" fill="none" stroke="#2a2208" strokeWidth="2" /></Svg>],
  ["Origin", <Svg><path d="M14 0c-1 2-1 3-1 4a8 8 0 0 1 3 14c-2 3-4 5-6 6 1-2 1-3 1-4A8 8 0 0 1 8 6c2-3 4-5 6-6zM12 9a3 3 0 1 0 0 6 3 3 0 0 0 0-6z" fill="#f0652a" fillRule="evenodd" /></Svg>],
  ["Xbox tool", <Svg><circle cx="12" cy="12" r="11" fill="#d7dcd7" /><path d="M5 6l14 13M19 5L6 19" stroke="#1f2b1f" strokeWidth="3" /><path d="M2 9l6 3-5 4zM12 14l5 7h-9zM14 3l4 2-4 4z" fill="#2fb344" /></Svg>],
  ["VS Code", <Svg><path d="M17 1L1 15l2 2L18 6z" fill="#1f8ad2" /><path d="M17 23L1 9l2-2 15 11z" fill="#1478bd" /><path d="M17 0l6 3v18l-6 3z" fill="#2aa1ee" /></Svg>],
  ["MySQL", <Svg><rect width="24" height="24" rx="3" fill="#1e4565" /><path d="M4 3c7 1 12 6 14 12l3 6-6-3M4 3l4 9 2 8 3-4" fill="none" stroke="#a8c7dc" strokeWidth="1.300" /></Svg>],
  ["Discord", <span className="flex size-6 items-center justify-center rounded-full bg-[#5865f2]"><FaDiscord className="size-4 text-white" /></span>],
  ["NordVPN", <Svg><circle cx="12" cy="12" r="11" fill="#4a8be0" /><path d="M1 19C5 5 19 5 23 19l-3 3H4z" fill="#1d4a8f" /><path d="M4 18l5-7 1.500 2L12 9l4 6 1-1 3 4-3-1-2 2-3-4-3 4-2-2z" fill="#fff" /></Svg>],
  ["Word", <Svg><path d="M6 1h18v7H6z" fill="#41a5ee" /><path d="M6 8h18v8H6z" fill="#2b7cd3" /><path d="M6 16h18v7H6z" fill="#174ea6" /><rect y="6" width="13" height="13" rx="1" fill="#185abd" /><path d="M2.500 9.500l2 6 2-5 2 5 2-6" fill="none" stroke="#fff" strokeWidth="1.500" /></Svg>, "dot"],
  ["Snipping Tool", <Svg><rect x="0" y="0" width="18" height="21" rx="2" fill="#f1f1f1" /><path d="M13 3H4v12h3M13 3v6" fill="none" stroke="#d33b26" strokeWidth="2.500" strokeDasharray="2.500 1" /><path d="M14 9v10M22 12l-9 6" stroke="#999" strokeWidth="1.800" /><circle cx="21.500" cy="13" r="2" fill="none" stroke="#2b9be0" strokeWidth="1.600" /><circle cx="14" cy="21.500" r="2" fill="none" stroke="#2b9be0" strokeWidth="1.600" /></Svg>, "active"],
];

const T = ({ children }) => <svg viewBox="0 0 16 16" className="size-4">{children}</svg>;
const TRAY = [
  ["NVIDIA", <T><rect x="1" y="3" width="14" height="10" fill="#111" /><path d="M2 8c3-5 8-4 10-4h2v8H7c-3 0-4-2-5-4z" fill="#76b900" /><path d="M4 8c2-3 6-3 8 0-2 3-6 3-8 0z" fill="none" stroke="#111" /><circle cx="8" cy="8" r="1.300" fill="#111" /></T>],
  ["Teams", <T><circle cx="11" cy="2.500" r="2.500" fill="#7b83eb" /><path d="M6 5h10v6a4 4 0 0 1-8 3z" fill="#5f67d5" /><rect y="3" width="11" height="11" fill="#fff" /><path d="M3 6h5M5.500 6v5.500" stroke="#4b53bc" strokeWidth="1.500" /></T>],
  ["Jet", <FaFighterJet className="size-[15px] -rotate-[135deg] text-[#dcdcdc]" />],
  ["Display", <T><rect y="2" width="16" height="10" rx="1" fill="#3d62e8" /><rect x="1" y="3" width="9" height="6" fill="#200020" /><path d="M4.500 4.500H2.500v3h2V6M6.500 4.500h2v3h-2z" stroke="#ff30e0" fill="none" /><path d="M5 14h6" stroke="#888" strokeWidth="2" /></T>],
  ["Afterburner", <T><rect x=".5" y=".5" width="15" height="15" fill="#222" stroke="#8acb12" /><path d="M2 4h12" stroke="#e05a5a" strokeDasharray="1.500 .5" strokeWidth="1.500" /><path d="M2 6.500h12" stroke="#e0a05a" strokeDasharray="1.500 .5" strokeWidth="1.500" /><path d="M2 9h12" stroke="#c9d05a" strokeDasharray="1.500 .5" strokeWidth="1.500" /><path d="M2 11.500h12" stroke="#69c050" strokeDasharray="1.500 .5" strokeWidth="1.500" /></T>],
  ["Lighting", <T><circle cx="8" cy="8" r="8" fill="#a0288c" /><path d="M0 8a8 8 0 0 0 8 8V0a8 8 0 0 0-8 8z" fill="#3b3f9b" /><path d="M4 3h8v3l-2 1v7H6.500V7L4 6z" fill="#f4eef6" /></T>],
  ["OneDrive", <T><path d="M3 13a3 3 0 0 1 0-6 5 5 0 0 1 9-1 3.500 3.500 0 0 1 1 7z" fill="#c9c9c9" /><path d="M3 13l6-5 5 5z" fill="#f4f4f4" /></T>],
  ["Power", <T><path d="M8 0l7 4v8l-7 4-7-4V4z" fill="#fff" /><path d="M5.500 5.500a3.500 3.500 0 1 0 5 0M8 3.500V8" stroke="#202020" strokeWidth="1.600" fill="none" /></T>],
  ["Eset", <T><rect x="1" y="1" width="13" height="13" rx="5" fill="#e8f6f7" stroke="#1597a5" strokeWidth="2" /><path d="M4.500 7.500h6c0-4-6-4-6 0s4 3.500 6 2" fill="none" stroke="#1597a5" strokeWidth="1.600" /><circle cx="12.500" cy="12.500" r="3.500" fill="#2d8fe0" /><path d="M12.500 11v3.500" stroke="#fff" /></T>],
  ["USB", <T><path d="M4 6V1h6v5M2.500 6h9v5M2.500 6v9h6" fill="none" stroke="#f1f1f1" strokeWidth="1.200" /><path d="M5.500 3h1M8 3h1" stroke="#f1f1f1" /><path d="M9 13l2 2 4-4" fill="none" stroke="#bbb" strokeWidth="1.200" /></T>],
  ["Security", <T><path d="M7 0l7 2.500V8c0 4-3 6-7 8-4-2-7-4-7-8V2.500z" fill="#2196e3" /><path d="M7 0v16c-4-2-7-4-7-8V2.500z" fill="#1673c0" /><circle cx="11.500" cy="11.500" r="4.500" fill="#15963c" /><path d="M9.500 11.500l1.500 1.500 2.500-3" stroke="#fff" fill="none" strokeWidth="1.200" /></T>],
  ["Network", <T><path d="M11 2H.6v10H12V8M3 15h7M6.500 12v3" fill="none" stroke="#f1f1f1" strokeWidth="1.200" /><path d="M12 .6h3.400v4H12zM13.700 5v10H11" fill="none" stroke="#f1f1f1" strokeWidth="1.200" /></T>],
  ["Volume", <Volume2 className="size-[17px] text-[#f1f1f1]" strokeWidth={1.6} />],
];

function Taskbar() {
  return (
    <footer className="flex h-12 items-center bg-[#202020] pr-5 pl-[10px]">
      {APPS.map(([name, icon, state]) => (
        <button
          key={name}
          aria-label={name}
          className="flex h-12 w-11 shrink-0 items-center justify-center"
        >
          <span className={"relative flex size-10 items-center justify-center rounded " + (state === "active" ? "bg-[#2d2d2d]" : "")}>
            {icon}
            {state === "dot" && <span className="absolute bottom-px h-[3px] w-1.5 rounded-full bg-[#9a9a9a]" />}
            {state === "active" && <span className="absolute bottom-px h-[3px] w-4 rounded-full bg-[#ff99a4]" />}
          </span>
        </button>
      ))}
      <div className="grow" />
      {TRAY.map(([name, icon]) => (
        <button key={name} aria-label={name} className="flex h-12 w-6 shrink-0 items-center justify-center">{icon}</button>
      ))}
      <time className="w-[75px] text-right text-[12px] leading-4 text-white">23:32<br />10/02/2022</time>
    </footer>
  );
}

export default function App() {
  return (
    <div className="flex min-h-screen flex-col bg-[#09090d] font-['Open_Sans',sans-serif]">
      <div className="flex flex-1">
        <Sidebar />
        <div className="flex min-w-0 flex-1 flex-col">
          <TabStrip />
          <div className="flex flex-1">
            <div className="w-px bg-gradient-to-b from-[#fa1e4e] to-[#09090d]" />
            <div className="flex min-w-0 flex-1 flex-col">
              <AddressBar />
              <BookmarkBar />
              <Dashboard />
            </div>
          </div>
        </div>
      </div>
      <Taskbar />
    </div>
  );
}
